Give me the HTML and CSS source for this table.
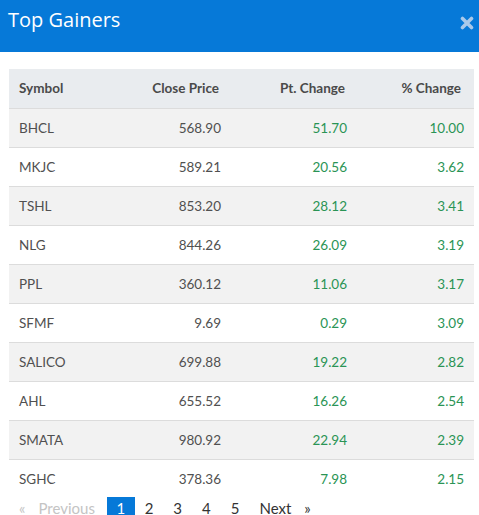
FILE: index.html
```html
<!DOCTYPE html>
<html>
<head>
<meta charset="utf-8">
<link rel="stylesheet" href="styles.css">
</head>
<body>
<div class="modal">
  <div class="modal-header">
    <h1 class="title">Top Gainers</h1>
    <span class="close" aria-label="close">
      <svg width="14" height="14" viewBox="0 0 14 14"><path d="M2.5 2.5 L11.5 11.5 M11.5 2.5 L2.5 11.5" stroke="#a9c9ea" stroke-width="3.6" stroke-linecap="round"/></svg>
    </span>
  </div>
  <div class="modal-body">
    <table class="grid">
      <colgroup>
        <col class="c1"><col class="c2"><col class="c3"><col class="c4">
      </colgroup>
      <thead>
        <tr><th class="left">Symbol</th><th>Close Price</th><th>Pt. Change</th><th class="last">% Change</th></tr>
      </thead>
      <tbody>
        <tr><td class="left">BHCL</td><td>568.90</td><td class="up">51.70</td><td class="up last">10.00</td></tr>
        <tr><td class="left">MKJC</td><td>589.21</td><td class="up">20.56</td><td class="up last">3.62</td></tr>
        <tr><td class="left">TSHL</td><td>853.20</td><td class="up">28.12</td><td class="up last">3.41</td></tr>
        <tr><td class="left">NLG</td><td>844.26</td><td class="up">26.09</td><td class="up last">3.19</td></tr>
        <tr><td class="left">PPL</td><td>360.12</td><td class="up">11.06</td><td class="up last">3.17</td></tr>
        <tr><td class="left">SFMF</td><td>9.69</td><td class="up">0.29</td><td class="up last">3.09</td></tr>
        <tr><td class="left">SALICO</td><td>699.88</td><td class="up">19.22</td><td class="up last">2.82</td></tr>
        <tr><td class="left">AHL</td><td>655.52</td><td class="up">16.26</td><td class="up last">2.54</td></tr>
        <tr><td class="left">SMATA</td><td>980.92</td><td class="up">22.94</td><td class="up last">2.39</td></tr>
        <tr><td class="left">SGHC</td><td>378.36</td><td class="up">7.98</td><td class="up last">2.15</td></tr>
      </tbody>
    </table>
    <div class="pager">
      <span class="pg disabled"><span class="arr">«</span>Previous</span>
      <span class="pg active">1</span>
      <span class="pg">2</span>
      <span class="pg">3</span>
      <span class="pg">4</span>
      <span class="pg">5</span>
      <span class="pg">Next<span class="arr r">»</span></span>
    </div>
  </div>
</div>
</body>
</html>
```
FILE: styles.css
```css
* { box-sizing: border-box; }
html, body { margin: 0; padding: 0; background: #fff; }
body { font-family: Lato, "Liberation Sans", sans-serif; color: #444; overflow: hidden; }

.modal { width: 479px; }
.modal-header {
  height: 52px;
  background: #0679d8;
  display: flex;
  justify-content: space-between;
  align-items: flex-start;
  padding: 6px 5px 0 8px;
}
.title {
  margin: 0;
  font-family: "Open Sans", sans-serif;
  font-weight: 400;
  font-size: 20px;
  line-height: 28px;
  color: #fff;
}
.close { display: block; margin-top: 10px; }
.close svg { display: block; }

.modal-body { padding: 17px 5px 0 9px; }

.grid {
  width: 465px;
  table-layout: fixed;
  border-collapse: collapse;
  font-size: 13.5px;
}
.c1 { width: 120px; }
.c2 { width: 100px; }
.c3 { width: 126px; }
.c4 { width: 119px; }

.grid th, .grid td {
  height: 39px;
  padding: 0 8px 0 10px;
  text-align: right;
  vertical-align: middle;
  white-space: nowrap;
}
.grid th {
  background: #e9ecef;
  font-weight: 700;
  color: #4a4a4a;
  padding-right: 10px;
}
.grid td { border-top: 1px solid #dcdcdc; color: #505050; }
.grid tbody tr:nth-child(odd) td { background: #f2f2f2; }
.grid .left { text-align: left; }
.grid td.last { padding-right: 10px; }
.grid th.last { padding-right: 13px; }
.grid .up { color: #2a9455; }

.pager {
  display: flex;
  align-items: flex-start;
  font-size: 15px;
  line-height: 22px;
  margin-top: -1px;
}
.pg { padding: 0 10px; color: #333; }
.pg.disabled { color: #c4c4c4; margin-right: 2px; }
.pg.active { background: #0679d8; color: #fff; padding: 0 9.5px; }
.arr { margin-right: 13px; }
.arr.r { margin: 0 0 0 13px; }
```
